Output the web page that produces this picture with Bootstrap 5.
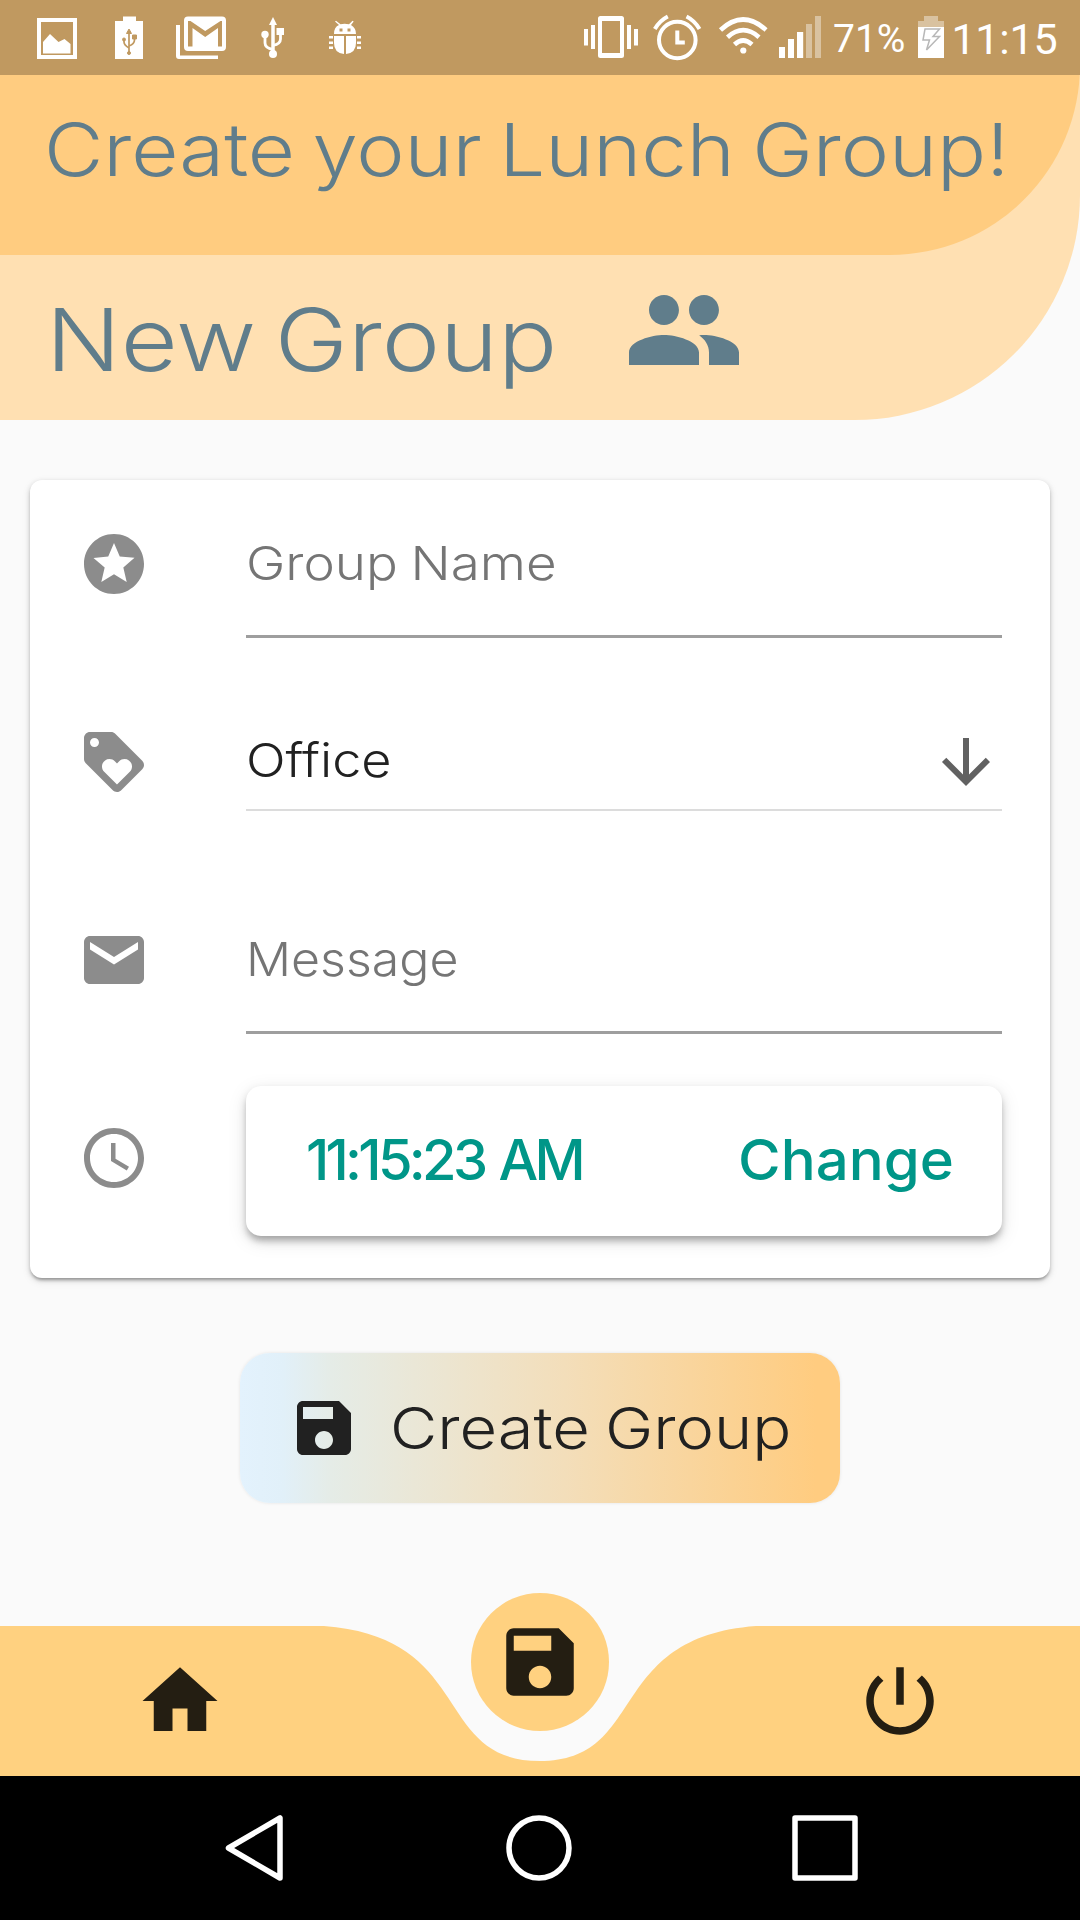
<!DOCTYPE html>
<html lang="en">
<head>
<meta charset="utf-8">
<meta name="viewport" content="width=device-width, initial-scale=1">
<title>Create your Lunch Group!</title>
<link href="https://cdn.jsdelivr.net/npm/bootstrap@5.3.0/dist/css/bootstrap.min.css" rel="stylesheet">
<style>
body{font-family:Inter,"Liberation Sans",sans-serif;font-weight:340;background:#fafafa;width:1080px;height:1920px;overflow:hidden}
svg{display:block;flex:none;overflow:visible}
.wide{display:inline-block;transform-origin:0 50%;white-space:nowrap;line-height:1}
.status-bar{height:75px;background:#c09960;color:#fff;font-family:Roboto,sans-serif;font-weight:400;padding:16px 23px 0 37px}
.status-bar .clock-text{font-size:43px;line-height:46px;margin-left:7px;letter-spacing:-.2px}
.status-bar .percent{font-size:39px;line-height:47px;width:74px;margin-left:12px}
.hero-outer{height:420px;margin-top:-75px;background:#ffe0b2;border-bottom-right-radius:225px;color:#607d8b}
.hero-inner{height:255px;padding-top:75px;background:#ffcc80;border-bottom-right-radius:190px}
.hero-title{font-size:73px;height:149px;padding-left:44px;margin:0;font-weight:340;word-spacing:-5px}
.hero-title .wide{transform:scaleX(1.117)}
.sub-title{height:165px;padding:4px 0 0 46px}
.sub-title .wide{font-size:87px;width:509px;word-spacing:-8px;transform:scaleX(1.131)}
.sub-title svg{margin:-20px 0 0 69px}
.form-panel{margin:60px 30px 0;height:798px;border:0;border-radius:12px;box-shadow:0 3px 3px -1px rgba(0,0,0,.26),0 2px 5px rgba(0,0,0,.17),0 3px 10px rgba(0,0,0,.09);padding:0 48px}
.field-row{height:198px;padding-top:48px}
.field-row>svg{margin-right:96px}
.field-box{width:756px;font-size:47px;color:#757575;word-spacing:-2px}
.field-line{height:110px;border-bottom:3px solid #9e9e9e}
.field-line .wide{margin-top:9px}
.pick-line .wide{margin-top:10px}
.pick-line{height:85px;border-bottom:2px solid #dcdcdc;color:#212121}
.time-box{width:756px;height:150px;background:#fff;border-radius:15px;margin-top:-36px;padding:0 48px 2px 60px;color:#009688;font-size:56px;font-weight:500;box-shadow:0 6px 6px -2px rgba(0,0,0,.2),0 5px 10px rgba(0,0,0,.15),0 5px 20px rgba(0,0,0,.1)}
.create-btn{width:600px;height:150px;border:0;border-radius:30px;margin-top:75px;padding:0 0 0 48px;color:#212121;font-size:58px;font-weight:340;word-spacing:-3px;background:linear-gradient(90deg,#e3f2fd 0,#e1f0f9 7%,#e5ece7 15%,#f3deba 54%,#ffcc80 96%);box-shadow:0 0 4px -1px rgba(0,0,0,.14)}
.bottom-nav{margin-top:123px;height:150px;color:#241e12}
.bottom-nav .wave{left:0;top:0}
.nav-items{padding:30px 135px 0}
.fab{left:471px;top:-33px;width:138px;height:138px;background:#ffd180}
.sys-nav{height:144px;background:#000;padding:39px 222px 0 225px}
</style>
</head>
<body>
<div class="status-bar position-relative z-3 d-flex align-items-start">
  <svg width="40" height="43" viewBox="37 16 40 43"><path d="M39 20h36v37H39z" fill="none" stroke="#fff" stroke-width="4"/><path d="M43 42l7-8 8.500 8 6-3 6 5v9.500H43z" fill="#fff"/></svg>
  <svg style="margin-left:38px" width="28" height="45" viewBox="115 16 28 45"><path d="M123 16.500h13V21h7v38h-28V21h8z" fill="#fff"/><g stroke="#c09960" fill="none" stroke-width="1.700"><path d="M129 32v22M124 39v3q0 3 5 6M134.500 37v3q0 4-5.500 6"/><path d="M129 29l2.500 4.500h-5zM132.500 35h4v4h-4zM122.500 39.500a1.500 1.500 0 1 0 3 0a1.500 1.500 0 1 0-3 0M127.500 53a1.500 1.500 0 1 0 3 0a1.500 1.500 0 1 0-3 0" fill="#c09960" stroke-width="1"/></g></svg>
  <svg style="margin-left:33px" width="50" height="45" viewBox="176 16 50 45"><path fill="#fff" fill-rule="evenodd" d="M188 16.500h34q4 0 4 4V47q0 4-4 4h-34q-4 0-4-4V20.500q0-4 4-4zM188 21v25.500h4.500V28l12.700 9L218 28v18.500h4V21h-1.500l-15.300 10L190.500 21z"/><path fill="#fff" d="M176 25h4v30.500h38V59h-39q-3 0-3-3z"/></svg>
  <svg style="margin-left:35px" width="24" height="45" viewBox="261 16 24 45"><g fill="none" stroke="#fff" stroke-width="2.800"><path d="M273 22v31" stroke-width="3.500"/><path d="M265 35v8q0 5 8 6.500M280.500 34v5q0 5-7.500 6.500"/></g><path fill="#fff" d="M273 17l4 8h-8zM276.500 28h7.500v7h-7.500z"/><circle cx="265" cy="34.500" r="3.700" fill="#fff"/><circle cx="273" cy="54" r="4" fill="#fff"/></svg>
  <svg style="margin-left:44px" width="32" height="45" viewBox="329 16 32 45"><path fill="#fff" fill-rule="evenodd" d="M334 34q0-7 5-9l-4-3.500 1-.8 4.500 3.500q4-1 8.500 0l3.500-3.500 1.200.8-2.700 3.500q5 3 5 9zM339.500 28.500v3h3v-3zM347.500 28.500v3h3v-3zM334 36h10v18q-10-1-10-11zM346 36h10v7q0 10-10 11zM329 36h4v2.500h-4zM329 41.500h4V44h-4zM329 46.500h4V49h-4zM357 36h4v2.500h-4zM357 41.500h4V44h-4zM357 46.500h4V49h-4z"/></svg>
  <svg style="margin-left:223px" width="54" height="45" viewBox="584 16 54 45"><path fill="#fff" fill-rule="evenodd" d="M584 29h4v16.500h-4zM591 25h4v24h-4zM627 25h4v24h-4zM634 29h4v16.500h-4zM600.500 16h21q2.500 0 2.500 2.500v37q0 2.500-2.500 2.500h-21q-2.500 0-2.500-2.500v-37q0-2.500 2.500-2.500zM602 21v32h18V21z"/></svg>
  <svg style="margin-left:15px" width="48" height="45" viewBox="653 16 48 45"><g fill="none" stroke="#fff" stroke-width="4"><circle cx="677.300" cy="40" r="18.300"/><path d="M677.300 30.500v12h7.500"/><path d="M654.800 29q5-8.500 13-12.500M699.500 29q-5-8.500-13-12.500"/></g></svg>
  <svg style="margin-left:17px" width="50" height="45" viewBox="718 16 50 45"><g fill="none" stroke="#fff" stroke-width="4.600"><path d="M720.500 30q22.500-21 45.500 0M727.500 37.200q15.700-14 31.500 0M734.500 44.500q8.600-8 17.500 0"/></g><circle cx="743.300" cy="50.500" r="3.100" fill="#fff"/></svg>
  <svg style="margin-left:11px" width="42" height="45" viewBox="779 16 42 45"><path fill="#fff" d="M779 47h6v11h-6zM788 39h6v19h-6zM797 32h6.200v26H797z"/><path fill="#d9c2a0" d="M806 24h6v34h-6zM815 16h6v42h-6z"/></svg>
  <span class="percent">71%</span>
  <svg style="margin-left:13px" width="26" height="45" viewBox="920 16 26 45"><path fill="#d9c2a0" d="M926 16h14v5h6v6h-26v-6h6z"/><path fill="#fff" d="M920 27h26v31h-26z"/><path d="M927 29h14.500l-6.500 7.500h6.500L928.500 50l3-10h-6.500z" fill="none" stroke="#b8b8b8" stroke-width="1.500"/></svg>
  <span class="clock-text">11:15</span>
</div>

<header class="hero-outer">
  <div class="hero-inner"><h1 class="hero-title d-flex align-items-center"><span class="wide">Create your Lunch Group!</span></h1></div>
  <div class="sub-title d-flex align-items-center">
    <span class="wide">New Group</span>
    <svg width="120" height="120" viewBox="0 0 24 24" fill="currentColor"><path d="M16 11c1.660 0 2.990-1.340 2.990-3S17.660 5 16 5s-3 1.340-3 3 1.340 3 3 3zm-8 0c1.660 0 2.990-1.340 2.990-3S9.660 5 8 5 5 6.340 5 8s1.340 3 3 3zm0 2c-2.330 0-7 1.170-7 3.500V19h14v-2.500c0-2.330-4.670-3.500-7-3.500zm8 0c-.29 0-.62.020-.97.050 1.160.84 1.970 1.970 1.970 3.450V19h6v-2.500c0-2.330-4.670-3.500-7-3.500z"/></svg>
  </div>
</header>

<main>
  <section class="card form-panel">
    <div class="field-row d-flex align-items-start">
      <svg width="72" height="72" viewBox="0 0 24 24" fill="#8c8c8c"><path d="M11.990 2C6.470 2 2 6.480 2 12s4.470 10 9.990 10C17.520 22 22 17.520 22 12S17.520 2 11.990 2zm4.240 16L12 15.450 7.770 18l1.120-4.810-3.730-3.230 4.920-.42L12 5l1.920 4.530 4.920.42-3.730 3.230L16.230 18z"/></svg>
      <div class="field-box field-line"><span class="wide" style="transform:scaleX(1.126)">Group Name</span></div>
    </div>
    <div class="field-row d-flex align-items-start">
      <svg width="72" height="72" viewBox="0 0 24 24" fill="#8c8c8c"><path d="M21.410 11.580l-9-9C12.050 2.220 11.550 2 11 2H4c-1.100 0-2 .9-2 2v7c0 .55.220 1.050.590 1.420l9 9c.36.360.860.580 1.410.580s1.050-.22 1.410-.59l7-7c.37-.36.590-.86.590-1.410s-.23-1.060-.59-1.420zM5.500 7C4.670 7 4 6.330 4 5.500S4.670 4 5.500 4 7 4.670 7 5.500 6.330 7 5.500 7zm11.770 8.270L13 19.540l-4.270-4.270C8.280 14.810 8 14.190 8 13.500c0-1.380 1.120-2.500 2.500-2.500.69 0 1.320.28 1.770.74l.73.72.73-.73c.45-.45 1.080-.73 1.770-.73 1.380 0 2.500 1.120 2.500 2.500 0 .69-.28 1.320-.73 1.770z"/></svg>
      <div class="field-box pick-line d-flex justify-content-between align-items-start"><span class="wide" style="transform:scaleX(1.11)">Office</span>
      <svg width="72" height="72" viewBox="0 0 24 24" fill="#616161"><path d="M20 12l-1.410-1.410L13 16.170V4h-2v12.170l-5.580-5.590L4 12l8 8 8-8z"/></svg></div>
    </div>
    <div class="field-row d-flex align-items-start">
      <svg width="72" height="72" viewBox="0 0 24 24" fill="#8c8c8c"><path d="M20 4H4c-1.100 0-1.990.9-1.990 2L2 18c0 1.100.9 2 2 2h16c1.100 0 2-.9 2-2V6c0-1.100-.9-2-2-2zm0 4.500l-8 5-8-5V6l8 5 8-5z"/></svg>
      <div class="field-box field-line"><span class="wide" style="transform:scaleX(1.065)">Message</span></div>
    </div>
    <div class="field-row d-flex align-items-start">
      <svg width="72" height="72" viewBox="0 0 24 24" fill="#8c8c8c"><path d="M11.990 2C6.470 2 2 6.480 2 12s4.470 10 9.990 10C17.520 22 22 17.520 22 12S17.520 2 11.990 2zM12 20c-4.420 0-8-3.580-8-8s3.580-8 8-8 8 3.580 8 8-3.580 8-8 8z"/><path d="M12.500 7H11v6l5.250 3.150.75-1.230-4.500-2.670z"/></svg>
      <div class="time-box d-flex align-items-center justify-content-between"><span class="wide" style="letter-spacing:-3.700px;word-spacing:3px">11:15:23 AM</span><span class="wide" style="transform-origin:100% 50%;transform:scaleX(1.038)">Change</span></div>
    </div>
  </section>
  <div class="d-flex justify-content-center">
    <button class="btn create-btn d-flex align-items-center" type="button">
      <svg width="72" height="72" viewBox="0 0 24 24" fill="currentColor"><path d="M17 3H5c-1.110 0-2 .9-2 2v14c0 1.100.890 2 2 2h14c1.100 0 2-.9 2-2V7l-4-4zm-5 16c-1.660 0-3-1.340-3-3s1.340-3 3-3 3 1.340 3 3-1.340 3-3 3zm3-10H5V5h10v4z"/></svg>
      <span class="wide" style="margin-left:30px;transform:scaleX(1.12)">Create Group</span>
    </button>
  </div>
</main>

<nav class="bottom-nav position-relative">
  <svg class="wave position-absolute" width="1080" height="150" viewBox="0 0 1080 150"><path fill="#ffd180" d="M0 0H324C475.200 11.250 432 135 540 135C648 135 604.800 11.250 756 0H1080V150H0z"/></svg>
  <div class="nav-items position-relative d-flex justify-content-between">
    <svg width="90" height="90" viewBox="0 0 24 24" fill="currentColor"><path d="M10 20v-6h4v6h5v-8h3L12 3 2 12h3v8z"/></svg>
    <svg width="90" height="90" viewBox="0 0 24 24" fill="currentColor"><path d="M13 3h-2v10h2V3zm4.830 2.170l-1.420 1.420C17.990 7.860 19 9.810 19 12c0 3.870-3.130 7-7 7s-7-3.130-7-7c0-2.190 1.010-4.140 2.580-5.420L6.170 5.170C4.230 6.820 3 9.260 3 12c0 4.970 4.030 9 9 9s9-4.030 9-9c0-2.740-1.230-5.180-3.170-6.830z"/></svg>
  </div>
  <div class="fab position-absolute rounded-circle d-flex align-items-center justify-content-center"><svg width="90" height="90" viewBox="0 0 24 24" fill="currentColor"><path d="M17 3H5c-1.110 0-2 .9-2 2v14c0 1.100.890 2 2 2h14c1.100 0 2-.9 2-2V7l-4-4zm-5 16c-1.660 0-3-1.340-3-3s1.340-3 3-3 3 1.340 3 3-1.340 3-3 3zm3-10H5V5h10v4z"/></svg></div>
</nav>
<div class="sys-nav d-flex">
  <svg width="58" height="66" viewBox="0 0 58 66" fill="none" stroke="#fff" stroke-width="5.500" stroke-linejoin="round"><path d="M55 3v60L3.500 33z"/></svg>
  <svg style="margin-left:223px" width="66" height="66" viewBox="0 0 66 66" fill="none" stroke="#fff" stroke-width="5.500"><circle cx="33" cy="33" r="30"/></svg>
  <svg style="margin-left:220px" width="66" height="66" viewBox="0 0 66 66" fill="none" stroke="#fff" stroke-width="5.500" stroke-linejoin="round"><path d="M3 3h60v60H3z"/></svg>
</div>
<script src="https://cdn.jsdelivr.net/npm/bootstrap@5.3.0/dist/js/bootstrap.bundle.min.js"></script>
</body>
</html>
